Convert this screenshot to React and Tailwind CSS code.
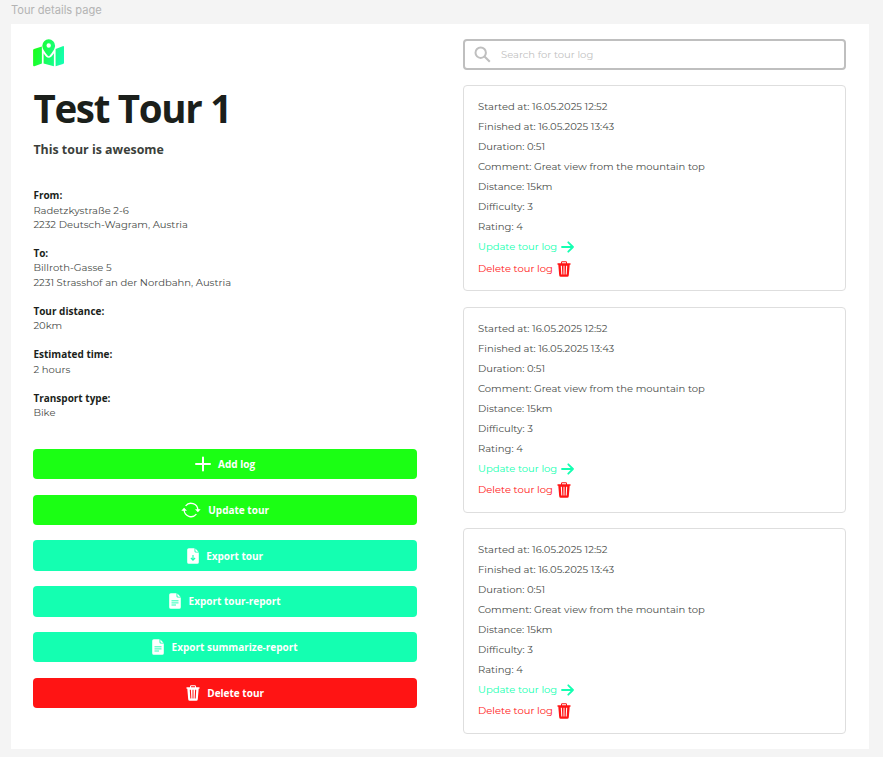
import React from "react";

const body = "font-['Montserrat','Inter',sans-serif]";
const bold = "font-['Open_Sans','Noto_Sans',sans-serif] font-bold";

function MapLogo() {
  return (
    <svg viewBox="0 0 31 28" className="h-[28px] w-[31px]">
      <linearGradient id="brand" gradientUnits="userSpaceOnUse" x1="0" x2="31" y1="10" y2="18">
        <stop offset="0" stopColor="#1bff14" />
        <stop offset="1" stopColor="#14ffb1" />
      </linearGradient>
      <g fill="url(#brand)" fillRule="evenodd">
        <path d="M1 9.9L8.9 7.4V24.4L1.4 27.2Q.1 27.5 .1 26.3V11.2Q.1 10.2 1 9.9Z" />
        <path d="M10.6 14.2Q13.2 18.8 15.7 18.8Q18.2 18.8 20.9 14.2V27.3L10.6 24.5Z" />
        <path d="M22.6 10.1L29.7 7.2Q31 6.8 31 8V23.8Q31 24.8 30 25.1L22.6 27.3Z" />
        <path d="M15.7 .3A6.4 6.4 0 0 1 22.1 6.7C22.1 10.1 18.2 14.8 16.4 16.9Q15.7 17.6 15 16.9C13.2 14.8 9.3 10.1 9.3 6.7A6.4 6.4 0 0 1 15.7 .3ZM15.7 4.3A2.2 2.2 0 1 0 15.7 8.7A2.2 2.2 0 1 0 15.7 4.3Z" />
      </g>
    </svg>
  );
}

function TrashIcon({ className }) {
  return (
    <svg viewBox="0 0 14 16" className={className} fill="currentColor" fillRule="evenodd">
      <path d="M4 2.2V1.5Q4 .3 5.2 .3H8.8Q10 .3 10 1.5V2.2H13.5V3.7H12.7L11.8 14.2Q11.7 15.7 10.2 15.7H3.8Q2.3 15.7 2.2 14.2L1.3 3.7H.5V2.2ZM5 2.2H9V1.3H5ZM3.8 4.7L4.3 13.6H5.3L4.9 4.7ZM6.5 4.7V13.6H7.5V4.7ZM9.1 4.7L8.7 13.6H9.7L10.2 4.7Z" />
    </svg>
  );
}

function PlusIcon() {
  return (
    <svg viewBox="0 0 16 16" className="h-4 w-4" stroke="currentColor" strokeWidth="2" strokeLinecap="round">
      <path d="M8 1.5V14.5M1 8H15" />
    </svg>
  );
}

function RefreshIcon() {
  return (
    <svg viewBox="0 0 20 16" className="h-4 w-5" fill="none" stroke="currentColor" strokeWidth="1.3">
      <path d="M4.6 3.8A7 7 0 0 1 16.9 8M15.4 12.2A7 7 0 0 1 3.1 8" />
      <path d="M14 7.2H19.7L16.9 10.3ZM.3 8.8H6L3.1 5.7Z" fill="currentColor" stroke="none" />
    </svg>
  );
}

function FileIcon({ download }) {
  return (
    <svg viewBox="0 0 12 16" className="h-4 w-3">
      <path d="M1.8 .3H7.5V3.2Q7.5 4.6 8.9 4.6H11.8V14.2Q11.8 15.7 10.2 15.7H1.8Q.2 15.7 .2 14.2V1.8Q.2 .3 1.8 .3ZM8.4 .6L11.5 3.7H9.1Q8.4 3.7 8.4 3Z" fill="currentColor" />
      {download ? (
        <path d="M6 7V12M3.9 10L6 12.1L8.1 10" fill="none" stroke="#14ffb1" strokeWidth="1.1" />
      ) : (
        <path d="M2.5 7.8H9.5M2.5 9.9H9.5M2.5 12H7" fill="none" stroke="#14ffb1" strokeWidth=".9" />
      )}
    </svg>
  );
}

const sections = [
  { label: "From:", lines: ["Radetzkystraße 2-6", "2232 Deutsch-Wagram, Austria"] },
  { label: "To:", lines: ["Billroth-Gasse 5", "2231 Strasshof an der Nordbahn, Austria"] },
  { label: "Tour distance:", lines: ["20km"] },
  { label: "Estimated time:", lines: ["2 hours"] },
  { label: "Transport type:", lines: ["Bike"] },
];

const buttons = [
  { text: "Add log", color: "bg-[#1bff14]", icon: <PlusIcon /> },
  { text: "Update tour", color: "bg-[#1bff14]", icon: <RefreshIcon /> },
  { text: "Export tour", color: "bg-[#14ffb1]", icon: <FileIcon download /> },
  { text: "Export tour-report", color: "bg-[#14ffb1]", icon: <FileIcon /> },
  { text: "Export summarize-report", color: "bg-[#14ffb1]", icon: <FileIcon /> },
  { text: "Delete tour", color: "bg-[#ff1414]", icon: <TrashIcon className="h-4 w-3.5" /> },
];

const logLines = [
  "Started at: 16.05.2025 12:52",
  "Finished at: 16.05.2025 13:43",
  "Duration: 0:51",
  "Comment: Great view from the mountain top",
  "Distance: 15km",
  "Difficulty: 3",
  "Rating: 4",
];

function LogCard() {
  return (
    <article className={`${body} h-[206px] rounded-[4px] border border-[#dedede] px-[14px] pt-[11.1px] text-[10px] leading-5 text-[#494c49]`}>
      {logLines.map((text) => (
        <p key={text} className="whitespace-nowrap">{text}</p>
      ))}
      <div className="flex h-5 items-center gap-1 text-[#14ffb1]">
        <span>Update tour log</span>
        <svg viewBox="0 0 13 12" className="h-3 w-[13px]" fill="none" stroke="currentColor" strokeWidth="1.8" strokeLinecap="round" strokeLinejoin="round">
          <path d="M1 6H12M7.3 1.3L12 6L7.3 10.7" />
        </svg>
      </div>
      <div className="flex h-[22.5px] items-center gap-1 text-[#ff1414]">
        <span>Delete tour log</span>
        <TrashIcon className="h-4 w-3.5" />
      </div>
    </article>
  );
}

export default function App() {
  return (
    <div className="h-[757px] w-[883px] overflow-hidden bg-[#f4f4f4]">
      <div className="h-6 pl-[11px] pt-[3px] font-['Inter'] text-[11.1px] leading-[15px] text-[#b3b3b3]">Tour details page</div>
      <main className="ml-[11px] flex h-[725px] w-[858px] gap-[45.6px] bg-white pl-[22.4px] pt-[15px]">
        <section className="w-[384px]">
          <MapLogo />
          <h1 className={`${bold} mt-[14px] h-[54px] whitespace-nowrap text-[38.5px] leading-[54px] tracking-[-1.3px] text-[#1b1f1b]`}>Test Tour 1</h1>
          <h2 className={`${bold} mt-1.5 h-[18px] text-[12.4px] leading-[18px] text-[#3b3f3b]`}>This tour is awesome</h2>
          <div className="mt-[29.3px] flex flex-col gap-[13.7px] text-[10px] leading-[14.35px]">
            {sections.map(({ label, lines }) => (
              <div key={label}>
                <h3 className={`${bold} h-[15.4px] text-[#1b1f1b]`}>{label}</h3>
                {lines.map((text) => (
                  <p key={text} className={`${body} whitespace-nowrap text-[#494c49]`}>{text}</p>
                ))}
              </div>
            ))}
          </div>
          <div className="mt-[28.4px] flex flex-col gap-[15.3px]">
            {buttons.map(({ text, color, icon }) => (
              <button key={text} className={`${bold} ${color} flex h-[30.5px] w-full items-center justify-center gap-[7.5px] rounded-[4px] pr-px text-[10px] text-white`}>
                {icon}
                <span className="pt-px">{text}</span>
              </button>
            ))}
          </div>
        </section>
        <section className="w-[383px]">
          <div className={`${body} flex h-[31px] items-center gap-[10px] rounded-[4px] border-2 border-[#bfbfbf] px-[9px] text-[10px] text-[#bfbfbf]`}>
            <svg viewBox="0 0 17 17" className="h-[17px] w-[17px]" fill="none" stroke="currentColor" strokeWidth="2">
              <circle cx="6.7" cy="6.7" r="5.2" />
              <path d="M10.5 10.5L15.8 15.8" />
            </svg>
            <span>Search for tour log</span>
          </div>
          <div className="mt-[15.3px] flex flex-col gap-[15.3px]">
            <LogCard />
            <LogCard />
            <LogCard />
          </div>
        </section>
      </main>
    </div>
  );
}
